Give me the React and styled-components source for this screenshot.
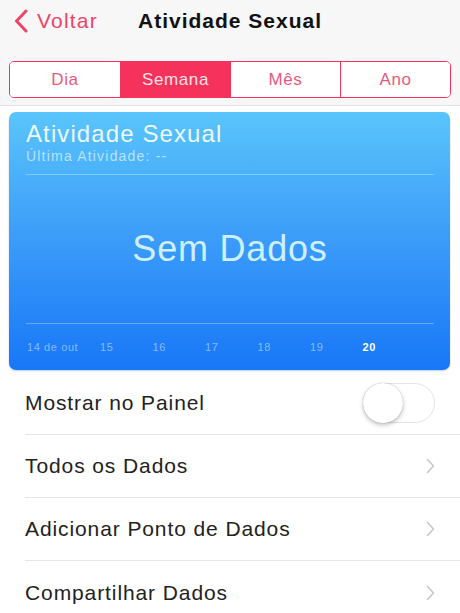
import React from "react";
import styled, { createGlobalStyle } from "styled-components";

const GlobalStyle = createGlobalStyle`
  html, body {
    margin: 0;
    padding: 0;
    background: #ffffff;
    font-family: "Liberation Sans", Arial, sans-serif;
  }
`;

const RED = "#f5325c";

const Page = styled.div`
  width: 460px;
  height: 613px;
  overflow: hidden;
  background: #fff;
`;

// top area with nav and segmented control
const Header = styled.div`
  background: #f7f7f7;
  border-bottom: 1px solid #e2e2e2;
  padding-bottom: 7px;
`;

const NavBar = styled.div`
  height: 42px;
  display: flex;
  align-items: center;
  padding-left: 14px;
`;

const Back = styled.div`
  display: flex;
  align-items: center;
  gap: 9px;
  color: #ec4468;
  font-size: 21px;
  letter-spacing: 1.2px;
  width: 124px;
`;

const Title = styled.div`
  font-weight: 700;
  font-size: 21px;
  letter-spacing: 1px;
  color: #111;
`;

const Segments = styled.div`
  margin: 19px 9px 0 9px;
  height: 35px;
  display: grid;
  grid-template-columns: repeat(4, 1fr);
  border: 1px solid ${RED};
  border-radius: 5px;
  overflow: hidden;
`;

const Segment = styled.div`
  display: flex;
  align-items: center;
  justify-content: center;
  font-size: 17px;
  letter-spacing: 0.6px;
  color: ${(p) => (p.$active ? "#fbe0e6" : "#e85a7d")};
  background: ${(p) => (p.$active ? RED : "#fff")};
  border-left: ${(p) => (p.$first ? "none" : `1px solid ${RED}`)};
`;

const Card = styled.div`
  margin: 6px 10px 0 9px;
  height: 258px;
  border-radius: 7px;
  background: linear-gradient(180deg, #5ac5fb 0%, #3e9ff9 45%, #1877f7 100%);
  box-shadow: 0 1px 2px rgba(0, 60, 160, 0.25);
  padding: 8px 16px 0 17px;
  box-sizing: border-box;
  display: flex;
  flex-direction: column;
`;

const CardTitle = styled.div`
  font-size: 24px;
  line-height: 28px;
  letter-spacing: 1.1px;
  color: #eef8ff;
`;

const CardSub = styled.div`
  font-size: 14px;
  line-height: 16px;
  letter-spacing: 1.2px;
  color: rgba(225, 245, 255, 0.72);
`;

const Rule = styled.div`
  height: 1px;
  background: rgba(255, 255, 255, 0.3);
  margin-top: ${(p) => p.$top || 0}px;
`;

const Empty = styled.div`
  height: 149px;
  display: flex;
  align-items: center;
  justify-content: center;
  font-size: 36px;
  letter-spacing: 0.8px;
  color: #cdf0ff;
`;

const Dates = styled.div`
  display: grid;
  grid-template-columns: 73px repeat(6, 52.5px);
  align-items: center;
  height: 46px;
  padding-left: 1px;
`;

const DateLabel = styled.div`
  font-size: 11px;
  letter-spacing: 0.6px;
  color: ${(p) => (p.$today ? "#ffffff" : "rgba(220, 240, 255, 0.55)")};
  font-weight: ${(p) => (p.$today ? 700 : 400)};
`;

const List = styled.div`
  margin-top: 2px;
`;

const Row = styled.div`
  height: 63px;
  margin-left: 25px;
  padding-right: 25px;
  display: flex;
  align-items: center;
  justify-content: space-between;
  border-bottom: ${(p) => (p.$last ? "none" : "1px solid #e6e6e6")};
  box-sizing: border-box;
`;

const RowLabel = styled.div`
  font-size: 21px;
  letter-spacing: 0.9px;
  color: #222;
`;

const Toggle = styled.div`
  width: 72px;
  height: 40px;
  border-radius: 20px;
  border: 1px solid #e4e4e4;
  box-sizing: border-box;
  position: relative;
`;

const Knob = styled.div`
  position: absolute;
  left: -1px;
  top: -1px;
  width: 40px;
  height: 40px;
  border-radius: 50%;
  background: #fff;
  box-shadow: 0 2px 4px rgba(0, 0, 0, 0.25), 0 0 1px rgba(0, 0, 0, 0.3);
`;

const BackChevron = () => (
  <svg width="14" height="24" viewBox="0 0 14 24">
    <path d="M12 2 L2.5 12 L12 22" fill="none" stroke="#ec4468" strokeWidth="3" strokeLinecap="round" strokeLinejoin="round" />
  </svg>
);

const Chevron = () => (
  <svg width="9" height="16" viewBox="0 0 9 16">
    <path d="M1.5 1.5 L7.5 8 L1.5 14.5" fill="none" stroke="#c7c7cc" strokeWidth="1.6" strokeLinecap="round" strokeLinejoin="round" />
  </svg>
);

const segments = ["Dia", "Semana", "Mês", "Ano"];
const dates = ["14 de out", "15", "16", "17", "18", "19", "20"];
const rows = ["Todos os Dados", "Adicionar Ponto de Dados", "Compartilhar Dados"];

export default function App() {
  return (
    <Page>
      <GlobalStyle />
      <Header>
        <NavBar>
          <Back>
            <BackChevron />
            Voltar
          </Back>
          <Title>Atividade Sexual</Title>
        </NavBar>
        <Segments>
          {segments.map((s, i) => (
            <Segment key={s} $active={s === "Semana"} $first={i === 0}>
              {s}
            </Segment>
          ))}
        </Segments>
      </Header>

      <Card>
        <CardTitle>Atividade Sexual</CardTitle>
        <CardSub>Última Atividade: --</CardSub>
        <Rule $top={10} />
        <Empty>Sem Dados</Empty>
        <Rule />
        <Dates>
          {dates.map((d, i) => (
            <DateLabel key={d} $today={i === dates.length - 1}>
              {d}
            </DateLabel>
          ))}
        </Dates>
      </Card>

      <List>
        <Row>
          <RowLabel>Mostrar no Painel</RowLabel>
          <Toggle>
            <Knob />
          </Toggle>
        </Row>
        {rows.map((r, i) => (
          <Row key={r} $last={i === rows.length - 1}>
            <RowLabel>{r}</RowLabel>
            <Chevron />
          </Row>
        ))}
      </List>
    </Page>
  );
}
